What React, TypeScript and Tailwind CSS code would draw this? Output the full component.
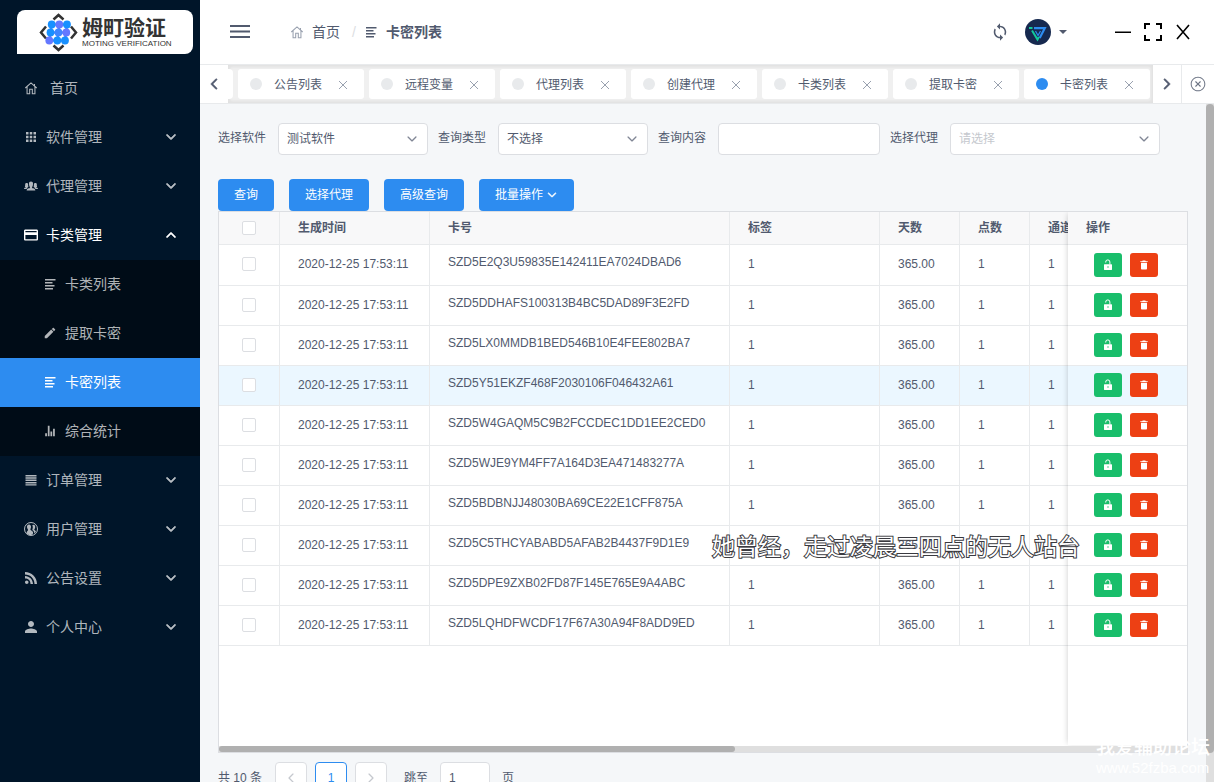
import { useState } from 'react';
import {
  IoIosArrowBack,
  IoIosArrowDown,
  IoIosArrowForward,
  IoIosArrowUp,
  IoIosCloseCircleOutline,
  IoIosPeople,
  IoLogoRss,
  IoMdApps,
  IoMdArrowDropdown,
  IoMdCard,
  IoMdCreate,
  IoMdPerson,
  IoMdStats,
  IoMdSync,
  IoMdTrash,
} from 'react-icons/io';

type Icon = (props: { className?: string }) => React.ReactNode;

interface MenuEntry {
  label: string;
  icon: Icon;
  children?: MenuEntry[];
}

const HomeIcon: Icon = ({ className }) => (
  <svg className={className} viewBox="0 0 16 16" fill="none" stroke="currentColor" strokeWidth="1.200">
    <path d="M1.500 8 8 2.200 14.500 8M12 5.600V3.500M3.500 6.600v7.900h3V9.500h3v5h3V6.600" />
  </svg>
);

const LinesIcon: Icon = ({ className }) => (
  <svg className={className} viewBox="0 0 14 14" fill="currentColor">
    <path d="M2 2h10.500v1.600H2zM2 5h7.500v1.600H2zM2 8h9.500v1.600H2zM2 11h8v1.600H2z" />
  </svg>
);

const RowsIcon: Icon = ({ className }) => (
  <svg className={className} viewBox="0 0 16 16" fill="currentColor">
    <path d="M2.500 3h11v1.500h-11zM2.500 5.300h11v1.500h-11zM2.500 7.600h11v1.500h-11zM2.500 9.900h11v1.500h-11zM2.500 12.200h11v1.300h-11z" />
  </svg>
);

const UnlockIcon: Icon = ({ className }) => (
  <svg className={className} viewBox="0 0 12 12">
    <path d="M3.700 3.500V3a2.100 2.100 0 0 1 4.200 0v2.500" fill="none" stroke="currentColor" strokeWidth="1" />
    <path
      d="M2.500 5.200h7c.3 0 .5.200.5.500v4.800c0 .3-.2.500-.5.500h-7c-.3 0-.5-.2-.5-.5V5.700c0-.3.200-.5.500-.5zM5.500 7.200v1.500h1V7.200z"
      fill="currentColor"
      fillRule="evenodd"
    />
  </svg>
);

const CrossIcon: Icon = ({ className }) => (
  <svg className={className} viewBox="0 0 10 10" stroke="currentColor" strokeWidth="1">
    <path d="m1 1 8 8M9 1 1 9" />
  </svg>
);

const UsersCircleIcon: Icon = ({ className }) => (
  <svg className={className} viewBox="0 0 16 16">
    <circle cx="8" cy="8" r="6.500" fill="none" stroke="currentColor" strokeWidth="1" />
    <path
      fill="currentColor"
      d="M6 3.500c1.300 0 2 1 2 2.300S7.400 8 7.400 8.600c0 .8 1.600 1.200 2.400 2.200.5.700.3 2-.2 2.800-2 .7-4.600.2-6-1.700.2-1.600 1.500-2 1.500-2.800 0-.7-1.100-1.600-1.100-3.300C4 4.500 4.700 3.500 6 3.500zM10.300 3.800c1.200 0 1.900.9 1.900 2.100 0 1.500-.9 2-.9 2.700 0 .6 1 .9 1.700 1.700-.4 1-1 1.600-1.700 2.200 0-1.600-.6-2.400-1.800-3.200-.4-.4.300-1.700.3-3 0-.9-.2-1.500-.5-2 .2-.3.500-.5 1-.5z"
    />
  </svg>
);

const menu: MenuEntry[] = [
  { label: '软件管理', icon: IoMdApps, children: [] },
  { label: '代理管理', icon: IoIosPeople, children: [] },
  {
    label: '卡类管理',
    icon: IoMdCard,
    children: [
      { label: '卡类列表', icon: LinesIcon },
      { label: '提取卡密', icon: IoMdCreate },
      { label: '卡密列表', icon: LinesIcon },
      { label: '综合统计', icon: IoMdStats },
    ],
  },
  { label: '订单管理', icon: RowsIcon, children: [] },
  { label: '用户管理', icon: UsersCircleIcon, children: [] },
  { label: '公告设置', icon: IoLogoRss, children: [] },
  { label: '个人中心', icon: IoMdPerson, children: [] },
];

const tabs = ['公告列表', '远程变量', '代理列表', '创建代理', '卡类列表', '提取卡密', '卡密列表'];

const cards = [
  'SZD5E2Q3U59835E142411EA7024DBAD6',
  'SZD5DDHAFS100313B4BC5DAD89F3E2FD',
  'SZD5LX0MMDB1BED546B10E4FEE802BA7',
  'SZD5Y51EKZF468F2030106F046432A61',
  'SZD5W4GAQM5C9B2FCCDEC1DD1EE2CED0',
  'SZD5WJE9YM4FF7A164D3EA471483277A',
  'SZD5BDBNJJ48030BA69CE22E1CFF875A',
  'SZD5C5THCYABABD5AFAB2B4437F9D1E9',
  'SZD5DPE9ZXB02FD87F145E765E9A4ABC',
  'SZD5LQHDFWCDF17F67A30A94F8ADD9ED',
];

const HOVER_ROW = 3;

const logoDots = [
  { x: 12.7, y: 11.5, fill: '#1890ff' },
  { x: 20.3, y: 11.5, fill: '#6478ff' },
  { x: 28, y: 11.5, fill: '#1890ff' },
  { x: 11.5, y: 19.5, fill: '#1890ff' },
  { x: 19.5, y: 19.5, fill: '#3f86ff' },
  { x: 27.3, y: 19.5, fill: '#6478ff' },
  { x: 10.3, y: 27.5, fill: '#6478ff' },
  { x: 18.3, y: 27.5, fill: '#1890ff' },
  { x: 26, y: 27.5, fill: '#1890ff' },
];

function Logo() {
  return (
    <div className="flex h-11 items-center gap-1 rounded-lg rounded-bl-none bg-white pl-[22px]">
      <svg className="size-[39px] shrink-0" viewBox="0 0 39 39">
        <g fill="none" stroke="#333" strokeWidth="2.500">
          <path d="M14.500 6.500 19.500 2l5 4.500M14.500 32.500l5 4.500 5-4.500M7 13.500 2 19.500l5 6M32 13.500l5 6-5 6" />
        </g>
        <g stroke="#4a80ff" strokeWidth="2.500">
          <path d="M12.700 11.500H28M11.500 19.500h15.800M10.300 27.500H26M12.700 11.500l-2.400 16M20.300 11.500l-2 16M28 11.500l-2 16" />
        </g>
        {logoDots.map((dot) => (
          <circle key={`${dot.x}-${dot.y}`} cx={dot.x} cy={dot.y} r="3.900" fill={dot.fill} />
        ))}
      </svg>
      <div className="flex flex-col text-[#333]">
        <span className="text-[21px] leading-6 font-bold">姆町验证</span>
        <span className="text-[8px] leading-2 whitespace-nowrap">MOTING VERIFICATION</span>
      </div>
    </div>
  );
}

function Sidebar() {
  const [open, setOpen] = useState('卡类管理');

  return (
    <aside className="w-50 shrink-0 bg-[#001529] text-sm text-white/70">
      <div className="h-16 pt-[10px] pr-[7px] pl-[17px]">
        <Logo />
      </div>
      <nav>
        <a href="#home" className="flex h-[49px] items-center gap-3 px-6 pb-0.5">
          <HomeIcon className="size-3.5" />
          首页
        </a>
        {menu.map((item) => {
          const expanded = open === item.label;
          return (
            <div key={item.label}>
              <button
                type="button"
                aria-expanded={expanded}
                onClick={() => setOpen(expanded ? '' : item.label)}
                className={`flex h-[49px] w-full items-center pr-[22px] pb-0.5 pl-[23px] ${expanded ? 'text-white' : ''}`}
              >
                <item.icon className="mr-[7px] size-4" />
                <span className="flex-1 text-left">{item.label}</span>
                {expanded ? (
                  <IoIosArrowUp className="size-3.5 stroke-current stroke-[20px]" />
                ) : (
                  <IoIosArrowDown className="size-3.5 stroke-current stroke-[20px]" />
                )}
              </button>
              {expanded && (
                <div className="bg-[#000c17]">
                  {item.children?.map((child) => (
                    <a
                      key={child.label}
                      href="#card"
                      className={`flex h-[49px] items-center gap-2 pb-0.5 pl-[43px] ${child.label === '卡密列表' ? 'bg-[#2d8cf0] text-white' : ''}`}
                    >
                      <child.icon className="size-3.5" />
                      {child.label}
                    </a>
                  ))}
                </div>
              )}
            </div>
          );
        })}
      </nav>
    </aside>
  );
}

function Header() {
  return (
    <header className="flex h-[65px] shrink-0 items-center border-b border-[#e8eaec] bg-white pr-[23px] pl-[30px] text-sm">
      <button type="button" aria-label="菜单">
        <svg className="h-4 w-5" viewBox="0 0 20 16" fill="currentColor">
          <path d="M0 1h20v2H0zM0 6.500h20v2H0zM0 12h20v2H0z" />
        </svg>
      </button>
      <div className="ml-10 flex flex-1 items-center">
        <HomeIcon className="mr-2 size-3.5 text-gray-400" />
        <a href="#home">首页</a>
        <span className="mr-2 ml-3 text-[#dcdee2]">/</span>
        <LinesIcon className="mr-2 size-3.5" />
        <span className="font-bold">卡密列表</span>
      </div>
      <button type="button" aria-label="刷新">
        <IoMdSync className="size-5" />
      </button>
      <button type="button" aria-label="账户" className="ml-[15px] flex items-center gap-1">
        <svg className="size-[26px]" viewBox="0 0 26 26">
          <circle cx="13" cy="13" r="13" fill="#16294f" />
          <path d="M9 9.200h10.800L14.700 19" fill="none" stroke="#2d8cf0" strokeWidth="2.200" />
          <path d="M4 9h3.500M7 11.500l5.500 9 1.500-2.500" fill="none" stroke="#12c99b" strokeWidth="2" />
          <path d="m10.500 12 2.500 4.500 2.500-4.500" fill="none" stroke="#2d8cf0" strokeWidth="1.200" />
        </svg>
        <IoMdArrowDropdown className="size-4" />
      </button>
      <div className="ml-11 flex items-center gap-3 text-black">
        <button type="button" aria-label="最小化">
          <svg className="size-4" viewBox="0 0 16 16" stroke="currentColor" strokeWidth="1.500">
            <path d="M0 8.250h16" />
          </svg>
        </button>
        <button type="button" aria-label="全屏">
          <svg className="size-5" viewBox="0 0 20 20" fill="none" stroke="currentColor" strokeWidth="2">
            <path d="M2 7V2h5M13 2h5v5M18 13v5h-5M7 18H2v-5" />
          </svg>
        </button>
        <button type="button" aria-label="关闭">
          <svg className="size-4" viewBox="0 0 16 16" fill="none" stroke="currentColor" strokeWidth="1.600">
            <path d="m2 1 12 14M14 1 2 15" />
          </svg>
        </button>
      </div>
    </header>
  );
}

function TabBar() {
  return (
    <div className="flex h-[39px] shrink-0 border-b border-[#e8eaec] bg-white">
      <button type="button" aria-label="向左" className="flex w-7 items-center justify-center">
        <IoIosArrowBack className="size-4 stroke-current stroke-[20px]" />
      </button>
      <div className="flex min-w-0 flex-1 items-center gap-[5px] overflow-hidden bg-[#f0f0f0] shadow-[inset_0_0_3px_2px_rgba(100,100,100,0.1)]">
        <div className="h-[30px] w-[5px] shrink-0 rounded-r bg-white" />
        {tabs.map((tab) => (
          <div key={tab} className="flex h-[30px] w-[126px] shrink-0 items-center rounded-[3px] bg-white px-3">
            <span className={`mr-3 size-3 rounded-full ${tab === '卡密列表' ? 'bg-[#2d8cf0]' : 'bg-[#e8eaec]'}`} />
            <a href="#tab" className="flex-1 pt-0.5">{tab}</a>
            <button type="button" aria-label={`关闭${tab}`} className="px-1 pt-0.5 text-gray-400">
              <CrossIcon className="size-[10px]" />
            </button>
          </div>
        ))}
      </div>
      <button type="button" aria-label="向右" className="flex w-7 items-center justify-center">
        <IoIosArrowForward className="size-4 stroke-current stroke-[20px]" />
      </button>
      <button type="button" aria-label="关闭标签" className="flex w-[33px] items-center justify-center border-l border-[#e8eaec] text-gray-500">
        <IoIosCloseCircleOutline className="size-[18px]" />
      </button>
    </div>
  );
}

function SelectField({ id, label, value, wide }: { id: string; label: string; value: string; wide?: boolean }) {
  return (
    <div className="flex shrink-0">
      <label htmlFor={id} className="mr-3 leading-[30px]">{label}</label>
      <div className={`relative ${wide ? 'w-[210px] text-[#c5c8ce]' : 'w-[150px]'}`}>
        <select id={id} className="h-8 w-full appearance-none rounded border border-[#dcdee2] bg-white px-2">
          <option>{value}</option>
        </select>
        <IoIosArrowDown className="pointer-events-none absolute top-[9px] right-[9px] size-3.5 text-[#808695]" />
      </div>
    </div>
  );
}

function Filters() {
  return (
    <form className="flex gap-[10px]">
      <SelectField id="software" label="选择软件" value="测试软件" />
      <SelectField id="type" label="查询类型" value="不选择" />
      <div className="flex shrink-0">
        <label htmlFor="content" className="mr-3 leading-[30px]">查询内容</label>
        <input id="content" className="h-8 w-[162px] rounded border border-[#dcdee2] bg-white px-2" />
      </div>
      <SelectField id="agent" label="选择代理" value="请选择" wide />
    </form>
  );
}

function Actions() {
  const style = 'flex h-8 items-center rounded bg-[#2d8cf0] px-4 text-white';
  return (
    <div className="mt-6 flex gap-[15px]">
      <button type="button" className={style}>查询</button>
      <button type="button" className={style}>选择代理</button>
      <button type="button" className={style}>高级查询</button>
      <button type="button" className={style}>
        批量操作
        <IoIosArrowDown className="ml-[3px] size-3 stroke-current stroke-[20px]" />
      </button>
    </div>
  );
}

function CheckBox({ label }: { label: string }) {
  return (
    <input
      type="checkbox"
      aria-label={label}
      className="mx-auto block size-3.5 appearance-none rounded-[2px] border border-[#dcdee2] bg-white checked:bg-[#2d8cf0]"
    />
  );
}

function CardTable() {
  const head = 'h-[33px] border-r border-b border-[#e8eaec] bg-[#f8f8f9] px-[18px] text-left font-bold whitespace-nowrap';
  const cell = 'border-r border-b border-[#e8eaec] px-[18px] pb-0.5';
  const rowStyle = (i: number) => `${i === 0 ? 'h-[41px]' : 'h-10'} ${i === HOVER_ROW ? 'bg-[#ebf7ff]' : 'bg-white'}`;

  return (
    <div className="relative h-[542px] overflow-hidden border border-[#dcdee2] bg-white">
      <table className="w-[1400px] table-fixed border-separate border-spacing-0">
        <colgroup>
          <col className="w-[61px]" />
          <col className="w-[150px]" />
          <col className="w-[300px]" />
          <col className="w-[150px]" />
          <col className="w-20" />
          <col className="w-[70px]" />
          <col />
        </colgroup>
        <thead>
          <tr>
            <th className="h-[33px] border-r border-b border-[#e8eaec] bg-[#f8f8f9]"><CheckBox label="全选" /></th>
            <th className={head}>生成时间</th>
            <th className={head}>卡号</th>
            <th className={head}>标签</th>
            <th className={head}>天数</th>
            <th className={head}>点数</th>
            <th className={head}>通道</th>
          </tr>
        </thead>
        <tbody>
          {cards.map((card, i) => (
            <tr key={card} className={rowStyle(i)}>
              <td className="border-r border-b border-[#e8eaec] pb-0.5"><CheckBox label={card} /></td>
              <td className={cell}>2020-12-25 17:53:11</td>
              <td className="border-r border-b border-[#e8eaec] px-[18px] pb-1.5">{card}</td>
              <td className={cell}>1</td>
              <td className={cell}>365.00</td>
              <td className={cell}>1</td>
              <td className={cell}>1</td>
            </tr>
          ))}
        </tbody>
      </table>

      {/* fixed column */}
      <div className="absolute top-0 right-0 bottom-[7px] w-[119px] bg-white shadow-[-2px_0_6px_-2px_rgba(0,0,0,0.2)]">
        <table className="w-full border-separate border-spacing-0">
          <thead>
            <tr>
              <th className="h-[33px] border-b border-[#e8eaec] bg-[#f8f8f9] px-[18px] text-left font-bold">操作</th>
            </tr>
          </thead>
          <tbody>
            {cards.map((card, i) => (
              <tr key={card} className={rowStyle(i)}>
                <td className="border-b border-[#e8eaec] pb-px pl-[26px]">
                  <div className="flex gap-2 text-white">
                    <button type="button" aria-label="解锁" className="flex h-6 w-7 items-center justify-center rounded-[3px] bg-[#19be6b]">
                      <UnlockIcon className="size-3" />
                    </button>
                    <button type="button" aria-label="删除" className="flex h-6 w-7 items-center justify-center rounded-[3px] bg-[#ed4014]">
                      <IoMdTrash className="size-3" />
                    </button>
                  </div>
                </td>
              </tr>
            ))}
          </tbody>
        </table>
      </div>

      {/* horizontal scrollbar */}
      <div className="absolute inset-x-0 bottom-0 h-[6px] bg-[#dfdfdf]">
        <div className="h-full w-[516px] rounded-full bg-[#b0b0b0]" />
      </div>
    </div>
  );
}

function Pager() {
  const box = 'flex size-8 items-center justify-center rounded border bg-white';
  return (
    <div className="mt-[9px] flex items-center">
      <span className="mr-[13px]">共 10 条</span>
      <div className="flex gap-2">
        <button type="button" aria-label="上一页" className={`${box} border-[#dcdee2] text-[#c5c8ce]`}>
          <IoIosArrowBack className="size-3.5" />
        </button>
        <button type="button" className={`${box} border-[#2d8cf0] text-[#2d8cf0]`}>1</button>
        <button type="button" aria-label="下一页" className={`${box} border-[#dcdee2] text-[#c5c8ce]`}>
          <IoIosArrowForward className="size-3.5" />
        </button>
      </div>
      <label htmlFor="page" className="mr-3 ml-[17px]">跳至</label>
      <input id="page" defaultValue="1" className="h-8 w-[50px] rounded border border-[#dcdee2] bg-white px-2" />
      <span className="ml-3">页</span>
    </div>
  );
}

export default function App() {
  return (
    <div className="relative flex h-screen overflow-hidden bg-[#f5f7f9] font-['Liberation_Sans','Noto_Sans_CJK_SC',sans-serif] text-xs text-[#515a6e]">
      <Sidebar />
      <div className="flex min-w-0 flex-1 flex-col">
        <Header />
        <TabBar />
        <div className="flex min-h-0 flex-1">
          <main className="min-w-0 flex-1 overflow-hidden px-[18px] pt-[19px]">
            <Filters />
            <Actions />
            <CardTable />
            <Pager />
          </main>
          <div className="w-2 bg-[#dfdfdf]">
            <div className="h-[649px] rounded-full bg-[#b0b0b0]" />
          </div>
        </div>
      </div>

      {/* desktop lyrics */}
      <p className="pointer-events-none absolute top-[531px] left-[712px] text-[23px] leading-8 whitespace-nowrap text-white [-webkit-text-stroke:2px_#3a3a40] [paint-order:stroke_fill]">
        她曾经，走过凌晨三四点的无人站台
      </p>
      <div className="pointer-events-none absolute right-1 bottom-1 text-white">
        <p className="text-[19px] leading-5 font-medium">我爱辅助论坛</p>
        <p className="text-[15px] leading-5">www.52fzba.com</p>
      </div>
    </div>
  );
}
